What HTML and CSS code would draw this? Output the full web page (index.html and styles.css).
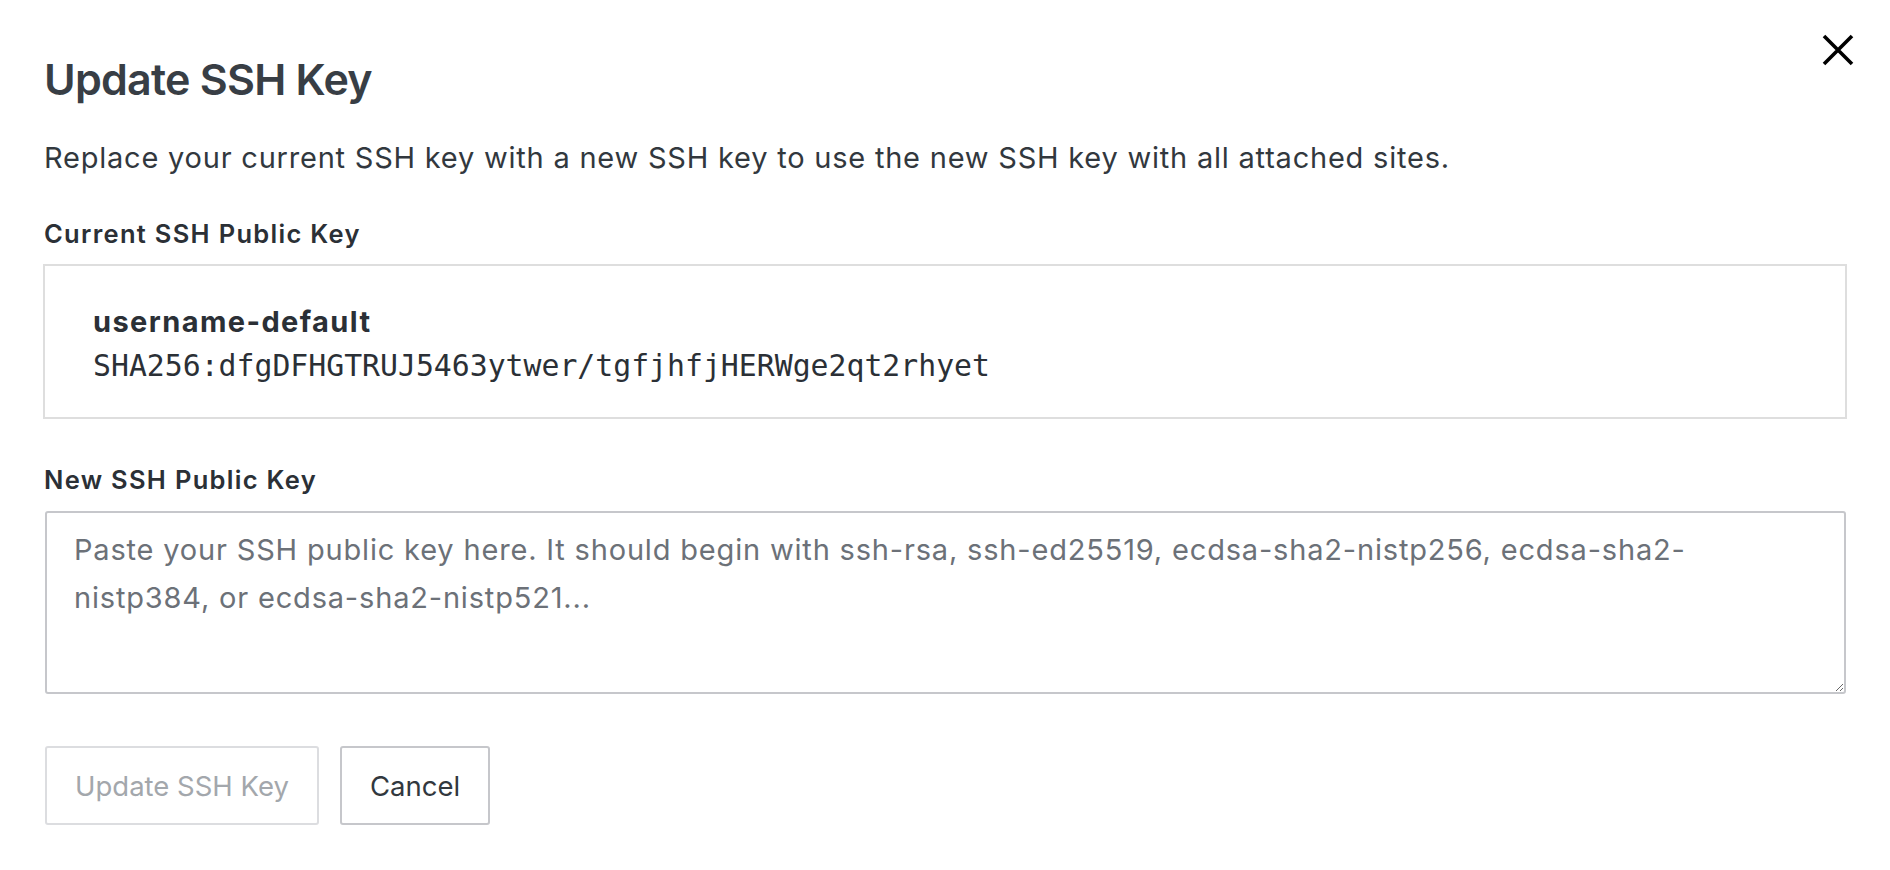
FILE: index.html
```html
<!DOCTYPE html>
<html lang="en">
<head>
<meta charset="utf-8">
<title>Update SSH Key</title>
<link rel="stylesheet" href="styles.css">
</head>
<body>
<div class="modal">
  <div class="modal-header">
    <h1 class="modal-title">Update SSH Key</h1>
    <button class="close-btn" aria-label="Close">
      <svg width="32" height="32" viewBox="0 0 32 32"><path d="M2 2 L30 30 M30 2 L2 30" stroke="#000" stroke-width="3.6" fill="none"/></svg>
    </button>
  </div>
  <p class="desc">Replace your current SSH key with a new SSH key to use the new SSH key with all attached sites.</p>
  <div class="field-label">Current SSH Public Key</div>
  <div class="key-box">
    <div class="key-name">username-default</div>
    <div class="key-fp">SHA256:dfgDFHGTRUJ5463ytwer/tgfjhfjHERWge2qt2rhyet</div>
  </div>
  <label class="field-label field-label-new" for="newkey">New SSH Public Key</label>
  <textarea id="newkey" class="key-input" placeholder="Paste your SSH public key here. It should begin with ssh-rsa, ssh-ed25519, ecdsa-sha2-nistp256, ecdsa-sha2-nistp384, or ecdsa-sha2-nistp521..."></textarea>
  <div class="actions">
    <button class="btn btn-disabled" disabled>Update SSH Key</button>
    <button class="btn btn-cancel">Cancel</button>
  </div>
</div>
</body>
</html>
```
FILE: styles.css
```css
* { box-sizing: border-box; }
html, body { margin: 0; padding: 0; background: #fff; }
body {
  font-family: Inter, "Noto Sans", "Liberation Sans", sans-serif;
  color: #32383e;
}
.modal {
  padding: 0 45px 0 44px;
}
.modal-header {
  display: flex;
  align-items: flex-start;
  justify-content: space-between;
}
.modal-title {
  margin: 53px 0 0 0;
  font-size: 43px;
  line-height: 52px;
  font-weight: 600;
  color: #383e45;
  letter-spacing: -0.75px;
}
.close-btn {
  margin: 34px -9px 0 0;
  padding: 0;
  border: 0;
  background: none;
  width: 32px;
  height: 32px;
  cursor: pointer;
}
.close-btn svg { display: block; }
.desc {
  margin: 33px 0 0 0;
  font-size: 29px;
  line-height: 40px;
  letter-spacing: 0.78px;
  color: #32383e;
}
.field-label {
  display: block;
  margin: 40px 0 0 0;
  font-size: 25.5px;
  line-height: 32px;
  font-weight: 600;
  letter-spacing: 1.3px;
  color: #2b3036;
}
.key-box {
  margin: 14px -2px 0 -1px;
  height: 155px;
  border: 2px solid #dedede;
  padding: 35px 48px 0 48px;
}
.key-name {
  font-size: 29px;
  line-height: 42px;
  font-weight: 700;
  letter-spacing: 1.4px;
  color: #2b3036;
}
.key-fp {
  margin-top: 2px;
  font-family: "DejaVu Sans Mono", "Liberation Mono", monospace;
  font-size: 29.8px;
  line-height: 42px;
  color: #2b3036;
}
.field-label-new {
  margin-top: 45px;
}
.key-input {
  display: block;
  width: 100%;
  height: 183px;
  margin: 15px 0 0 1px;
  border: 2px solid #c6c7cb;
  border-radius: 3px;
  padding: 13px 45px 13px 27px;
  font-family: Inter, "Noto Sans", "Liberation Sans", sans-serif;
  font-size: 29px;
  line-height: 48px;
  letter-spacing: 0.82px;
  color: #32383e;
  resize: vertical;
  outline: none;
}
.key-input::placeholder {
  color: #6c7178;
  opacity: 1;
}
.actions {
  display: flex;
  gap: 21px;
  margin: 52px 0 0 1px;
}
.btn {
  height: 79px;
  padding: 0 28px;
  border-radius: 3px;
  background: #fff;
  font-family: Inter, "Noto Sans", "Liberation Sans", sans-serif;
  font-size: 27.5px;
  font-weight: 400;
}
.btn-disabled {
  border: 2px solid #dcdde0;
  color: #a3a7ac;
}
.btn-cancel {
  border: 2px solid #c6c7cb;
  color: #32383e;
  cursor: pointer;
}
```
